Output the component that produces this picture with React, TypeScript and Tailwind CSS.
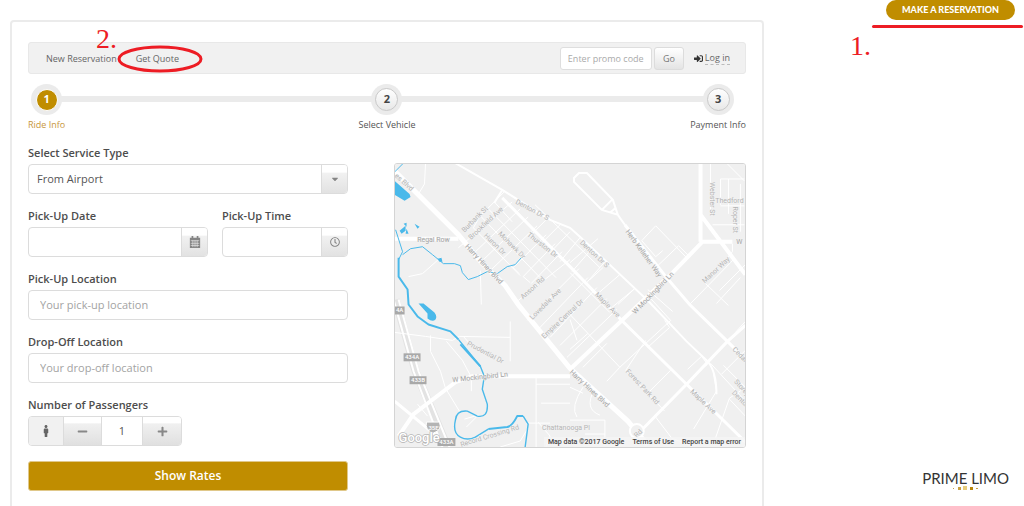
import { useState } from "react";
import {
  FaCaretDown,
  FaMale,
  FaMinus,
  FaPlus,
  FaRegClock,
  FaSignInAlt,
} from "react-icons/fa";

const steps = ["Ride Info", "Select Vehicle", "Payment Info"];

// [text, x, y, rotation]
const streetLabels: [string, number, number, number][] = [
  ["es Blvd", 402, 184, 42],
  ["Burbank St", 476, 221, -45],
  ["Brookfield Ave", 487, 225, -43],
  ["Denton Dr S", 531, 212, 28],
  ["Huron Dr", 493, 246, 45],
  ["Mohawk Dr", 510, 247, 45],
  ["Thurston Dr", 541, 247, 38],
  ["Anson Rd", 534, 290, -42],
  ["Lovedale Ave", 547, 306, -45],
  ["Empire Central Dr", 564, 321, -43],
  ["Denton Dr S", 593, 256, 43],
  ["Maple Ave", 606, 307, 45],
  ["Thedford", 730, 203, 0],
  ["Webster St", 710, 199, 90],
  ["Roper St", 734, 220, 90],
  ["Manor Way", 718, 272, -43],
  ["Prudential Dr", 484, 355, 28],
  ["Forest Park Rd", 641, 389, 47],
  ["Maple Ave", 702, 404, 43],
  ["Cedar", 739, 357, 45],
  ["Storey", 741, 390, 48],
  ["Denton", 740, 402, 45],
  ["Chattanooga Pl", 566, 431, 0],
  ["Record Crossing Rd", 490, 439, -17],
  ["Rd", 640, 436, -45],
];

const mainLabels: [string, number, number, number][] = [
  ["Regal Row", 433, 242, 0],
  ["Harry Hines Blvd", 482, 266, 47],
  ["Harry Hines Blvd", 588, 391, 43],
  ["Herb Kelleher Way", 642, 255, 54],
  ["W Mockingbird Ln", 655, 295, -46],
  ["W Mockingbird Ln", 480, 380, -6],
  ["W", 740, 244, 0],
];

const exits: [string, number, number, number][] = [
  ["4A", 394, 307, 10],
  ["434A", 403, 354, 17],
  ["433B", 409, 377, 17],
  ["433A", 437, 439, 18],
];

function CalendarIcon() {
  return (
    <svg viewBox="0 0 14 14" className="size-3" aria-hidden="true">
      <path fill="currentColor" d="M3 0h2v2h4V0h2v2h2v12H1V2h2z" />
      <path
        stroke="#f3f3f3"
        strokeWidth="0.7"
        d="M2 5.5h10M2 8.5h10M2 11h10M4.5 5v8M7 5v8M9.5 5v8"
      />
    </svg>
  );
}

function RouteMap() {
  return (
    <svg
      viewBox="394 164 352 284"
      preserveAspectRatio="xMidYMid slice"
      className="block h-[283px] w-full"
      role="img"
      aria-label="Map"
    >
      <rect x="394" y="164" width="352" height="284" fill="#f0f0f0" />

      {/* interstate */}
      <g fill="none" stroke="#e3e3e3">
        <path strokeWidth="8" d="M395 300 415 372 447 448" />
        <path stroke="#fff" strokeWidth="2" d="M393 300 413 372 442 448M398 300 418 372 449 448" />
      </g>

      {/* side streets */}
      <g fill="none" stroke="#fff" strokeWidth="1">
        <path d="M425 164 424 184 418 194M440 258 422 274 408 277M394 333 425 337 452 341 459 337 510 338M446 342 462 361 471 378 471 392M430 336 430 352 440 372M440 372 445 389 459 412M463 337 470 345M510 322V362M536 378V448M536 385H570M541 404H570M417 405 427 417M480 271 481 305M464 420 478 416 466 428" />
        <path d="M494 202 480 216 540 278M480 216 473 228 520 276M488 209 556 278M512 202 458 248M520 209 472 255M528 217 480 263M537 226 489 272M546 235 513 268 519 274M555 244 523 277 530 283M562 252 531 284M570 260 518 301M579 269 527 321M588 278 538 330M597 288 550 338M607 299 560 346M617 310 567 358M535 205 559 228 600 268M504 192 494 202 512 222M546 220 529 237M560 225 539 246M570 232 549 254M580 238 560 262M592 249 572 272M606 261 586 284M620 275 598 294M635 289 612 308" />
        <path d="M642 241 656 226 688 259 676 270M642 241 656 257 663 251M656 268 679 246 690 257M603 268 590 280M598 239 570 263M570 273 610 313M570 320 577 341M570 350 588 334 620 368 607 382M588 334 570 315M607 344 583 368M620 368 671 321 651 299M646 341 626 371M665 321 670 328 648 348M688 370 702 357 708 365 694 376M671 371 650 392M626 371 665 412M656 418 672 439 694 448M694 430 717 392M717 392 714 375M716 439 730 399 745 389M711 364 746 402M722 375 746 351M730 400 746 417M724 366 746 388M736 333 746 322M728 164 745 181M711 164V215M721 179H745M721 179V205M729 179V214M741 184V232M713 225H745M721 206H745M733 244V252L728 258M717 304 741 278M690 305 734 260M706 284 729 306M720 291 746 265M648 290 673 312M618 305 635 289M570 421H605V447M605 435H585M570 388 583 394M583 388Q570 408 577 418M594 391Q584 410 600 416M526 424H550M528 429 520 442 500 448M538 423 550 437 546 448" />
      </g>

      {/* secondary roads */}
      <g fill="none" stroke="#fff" strokeWidth="2">
        <path d="M453 162 502 190 550 220 570 228 580 237 613 268 650 303 687 342 708 362Q717 372 717 395" />
        <path d="M502 190 494 203M574 182 574 178 579 173 587 173 613 200 618 215 602 210ZM602 210 613 199M618 215 625 225M610 213 616 208" />
      </g>
      <g fill="none" stroke="#fff" strokeWidth="3">
        <path d="M502 198 570 267 623 322 687 385 746 443M625 225 667 278 690 305 728 342 746 360" />
        <path d="M394 402 440 440M746 326 728 342 687 385 640 433" />
      </g>
      <g fill="none" stroke="#fff" strokeWidth="4">
        <path d="M394 239H458M733 242H703L673 273 570 370M570 377H472L455 383 413 415 398 437M701 164V242M701 215 746 275" />
      </g>
      <path
        fill="none"
        stroke="#fff"
        strokeWidth="5"
        d="M394 171 458 235 482 264 505 286 518 305 570 369 628 422 648 446"
      />
      <circle cx="637" cy="432" r="7" fill="#f0f0f0" stroke="#fff" strokeWidth="2" />

      {/* water */}
      <g fill="none" stroke="#4ab9ea" strokeLinejoin="round">
        <path strokeWidth="1" d="M395 230 402 252 398 260M402 255 410 249 422 247 432 255 443 264 454 264 460 266 462 273 468 280 477 277 487 272 497 274 507 267 515 265 522 257M394 172 402 164" />
        <path strokeWidth="2" d="M398 258V277L407 290 408 305 417 317 428 325 450 332 458 340" />
        <path strokeWidth="1.4" d="M458 340 480 367 484 377 482 390 487 405Q488 419 477 417L467 412Q456 411 455 421 452 434 460 438 467 442 475 438L488 430M523 417 528 425 525 448" />
        <path strokeWidth="2" d="M460 345 480 367M488 430 507 428Q512 427 517 417L523 417" />
      </g>
      <g fill="#4ab9ea">
        <path d="M394 181 409 194 410 197 404 201 394 195ZM418 304H423L434 313Q437 317 435 320 432 323 427 319L427 314ZM399 231 405 226 405 231 401 234ZM403 224 406 223 406 227ZM406 229 408 234 405 234ZM414 224 419 227 417 229ZM437 259 441 258 442 262 439 262Z" />
      </g>

      {/* text */}
      <g
        fontFamily="Roboto, sans-serif"
        fill="#b4b4b4"
        stroke="#f3f3f3"
        strokeWidth="1"
        paintOrder="stroke"
        textAnchor="middle"
      >
        <g fontSize="7">
          {streetLabels.map(([text, x, y, r], i) => (
            <text key={i} transform={`translate(${x} ${y}) rotate(${r})`}>
              {text}
            </text>
          ))}
        </g>
        <g fontSize="7" fill="#a4a4a4">
          {mainLabels.map(([text, x, y, r], i) => (
            <text key={i} transform={`translate(${x} ${y}) rotate(${r})`}>
              {text}
            </text>
          ))}
        </g>
      </g>
      <g fontFamily="Roboto, sans-serif" fontSize="6" fontWeight="500" textAnchor="middle">
        {exits.map(([text, x, y, w]) => (
          <g key={text}>
            <rect x={x} y={y} width={w} height="8" fill="#a9a9a9" />
            <text x={x + w / 2} y={y + 6} fill="#fff">
              {text}
            </text>
          </g>
        ))}
        <path fill="#b4b4b4" stroke="#fff" d="M426 423H439Q442 431 433 434 424 431 426 423Z" />
        <text x="433" y="431" fill="#fff">
          35E
        </text>
      </g>
      <text
        x="398"
        y="443"
        fontFamily="Roboto, sans-serif"
        fontSize="13"
        fontWeight="500"
        fill="#fff"
        stroke="#b5b5b5"
        strokeWidth="1.5"
        paintOrder="stroke"
      >
        Google
      </text>
    </svg>
  );
}

const labelClass = "block h-[21px] text-[11px] leading-[19px] font-semibold text-[#4d4d4d]";
const boxClass = "flex h-[30px] overflow-hidden rounded border border-[#dcdcdc] bg-white";
const addonClass =
  "flex w-[26px] shrink-0 items-center justify-center border-l border-[#dcdcdc] bg-linear-to-b from-white from-25% via-[#f1f1f1] via-30% to-[#e2e2e2] text-[#858585]";
const stepButtonClass =
  "flex w-[38px] items-center justify-center bg-linear-to-b from-white from-20% via-[#f0f0f0] via-25% to-[#e0e0e0] text-[#888]";

export default function App() {
  const [service, setService] = useState("From Airport");
  const [passengers, setPassengers] = useState(1);

  return (
    <div className="flex h-screen overflow-hidden bg-white pl-[10px] font-['Open_Sans',sans-serif] text-[#555]">
      <main className="min-w-0 flex-1 pt-5">
        <div className="min-h-full rounded border-2 border-[#ebebeb] px-4 pt-5 pb-8">
          <nav className="relative flex h-8 items-center rounded-[3px] border border-[#e8e8e8] bg-[#f1f1f1] pt-px pr-[15px] pl-[17px] text-[9px] text-[#666]">
            <a href="#reservation">New Reservation</a>
            <a href="#quote" className="ml-[19px]">
              Get Quote
            </a>
            <form className="ml-auto flex items-center gap-[2px]" onSubmit={(e) => e.preventDefault()}>
              <input
                aria-label="Promo code"
                placeholder="Enter promo code"
                className="h-[23px] w-[92px] rounded-[3px] border border-[#dedede] bg-white px-[7px] placeholder:text-[#aaa]"
              />
              <button className="h-[23px] w-[30px] rounded-[3px] border border-[#dcdcdc] bg-linear-to-b from-white to-[#e4e4e4] text-[#777]">
                Go
              </button>
            </form>
            <a href="#login" className="ml-[10px] flex items-center gap-[2px]">
              <FaSignInAlt className="size-[9px] text-[#333]" />
              <span className="border-b border-dashed border-[#bbb] leading-3">Log in</span>
            </a>

            {/* marker 2 */}
            <span className="absolute -top-5 left-[67px] font-['Liberation_Serif',serif] text-[28px] leading-8 text-[#ed1c24]">
              2.
            </span>
            <svg viewBox="0 0 88 30" className="absolute top-[1px] left-[87px] h-[30px] w-[88px]" aria-hidden="true">
              <ellipse cx="44" cy="15" rx="41" ry="12" fill="none" stroke="#ed1c24" strokeWidth="3" />
            </svg>
          </nav>

          <ol className="mt-[10px] grid grid-cols-3 text-[9px]">
            <li
              aria-hidden="true"
              className="col-span-3 col-start-1 row-start-1 mx-5 mt-[12px] h-[6px] bg-[#ebebeb]"
            />
            <li className="col-start-1 row-start-1 flex flex-col items-center justify-self-start text-[#c8963a]">
              <span className="flex size-[31px] items-center justify-center rounded-full bg-[#ebebeb]">
                <span className="flex size-[22px] items-center justify-center rounded-full border border-white bg-[#c08d00] text-[11px] font-bold text-white">
                  1
                </span>
              </span>
              <span className="leading-5">{steps[0]}</span>
            </li>
            <li className="col-start-2 row-start-1 flex flex-col items-center justify-self-center">
              <span className="flex size-[31px] items-center justify-center rounded-full bg-[#ebebeb]">
                <span className="flex size-[23px] items-center justify-center rounded-full border border-[#c9c9c9] bg-linear-to-b from-white to-[#e8e8e8] text-[11px] font-bold text-[#444]">
                  2
                </span>
              </span>
              <span className="leading-5">{steps[1]}</span>
            </li>
            <li className="col-start-3 row-start-1 flex flex-col items-center justify-self-end">
              <span className="flex size-[31px] items-center justify-center rounded-full bg-[#ebebeb]">
                <span className="flex size-[23px] items-center justify-center rounded-full border border-[#c9c9c9] bg-linear-to-b from-white to-[#e8e8e8] text-[11px] font-bold text-[#444]">
                  3
                </span>
              </span>
              <span className="leading-5">{steps[2]}</span>
            </li>
          </ol>

          <div className="mt-2 grid grid-cols-[minmax(0,10fr)_minmax(0,11fr)] items-start gap-x-[46px]">
            <form className="flex flex-col gap-3 text-[11px]" onSubmit={(e) => e.preventDefault()}>
              <div>
                <label htmlFor="service" className={labelClass}>
                  Select Service Type
                </label>
                <div className={boxClass}>
                  <select
                    id="service"
                    value={service}
                    onChange={(e) => setService(e.target.value)}
                    className="min-w-0 flex-1 appearance-none bg-transparent pl-2"
                  >
                    <option>From Airport</option>
                    <option>To Airport</option>
                  </select>
                  <span className={addonClass}>
                    <FaCaretDown className="size-[10px]" />
                  </span>
                </div>
              </div>

              <div className="grid grid-cols-[minmax(0,10fr)_minmax(0,7fr)] gap-[14px]">
                <div>
                  <label htmlFor="date" className={labelClass}>
                    Pick-Up Date
                  </label>
                  <div className={boxClass}>
                    <input id="date" className="min-w-0 flex-1 px-2" />
                    <span className={addonClass}>
                      <CalendarIcon />
                    </span>
                  </div>
                </div>
                <div>
                  <label htmlFor="time" className={labelClass}>
                    Pick-Up Time
                  </label>
                  <div className={boxClass}>
                    <input id="time" className="min-w-0 flex-1 px-2" />
                    <span className={addonClass}>
                      <FaRegClock className="size-[10px]" />
                    </span>
                  </div>
                </div>
              </div>

              <div>
                <label htmlFor="pickup" className={labelClass}>
                  Pick-Up Location
                </label>
                <div className={boxClass}>
                  <input
                    id="pickup"
                    placeholder="Your pick-up location"
                    className="min-w-0 flex-1 px-[11px] placeholder:text-[#a3a3a3]"
                  />
                </div>
              </div>

              <div>
                <label htmlFor="dropoff" className={labelClass}>
                  Drop-Off Location
                </label>
                <div className={boxClass}>
                  <input
                    id="dropoff"
                    placeholder="Your drop-off location"
                    className="min-w-0 flex-1 px-[11px] placeholder:text-[#a3a3a3]"
                  />
                </div>
              </div>

              <div>
                <label htmlFor="passengers" className={labelClass}>
                  Number of Passengers
                </label>
                <div className="inline-flex h-[30px] overflow-hidden rounded border border-[#dcdcdc] align-top">
                  <span className="flex w-[34px] items-center justify-center bg-[#f1f1f1] text-[#666]">
                    <FaMale className="size-3" />
                  </span>
                  <button
                    type="button"
                    aria-label="Fewer passengers"
                    onClick={() => setPassengers(Math.max(1, passengers - 1))}
                    className={`${stepButtonClass} border-l border-[#dcdcdc]`}
                  >
                    <FaMinus className="size-[11px]" />
                  </button>
                  <input
                    id="passengers"
                    inputMode="numeric"
                    value={passengers}
                    onChange={(e) => setPassengers(Number(e.target.value) || 1)}
                    className="w-[42px] border-x border-[#dcdcdc] bg-white text-center"
                  />
                  <button
                    type="button"
                    aria-label="More passengers"
                    onClick={() => setPassengers(passengers + 1)}
                    className={stepButtonClass}
                  >
                    <FaPlus className="size-[11px]" />
                  </button>
                </div>
              </div>

              <button className="mt-[3px] h-[30px] rounded-[3px] border border-[#e0c88a] bg-[#c08d00] text-[12px] font-semibold text-white">
                Show Rates
              </button>
            </form>

            <div className="relative mt-5 overflow-hidden rounded-[3px] border border-[#d4d4d4]">
              <RouteMap />
              <div className="absolute right-0 bottom-0 flex gap-2 bg-[#f5f5f5]/80 px-1 font-['Roboto',sans-serif] text-[7px] leading-[10px] font-medium text-[#444]">
                <span>Map data ©2017 Google</span>
                <a href="#terms">Terms of Use</a>
                <a href="#report">Report a map error</a>
              </div>
            </div>
          </div>
        </div>
      </main>

      <aside className="flex w-[260px] shrink-0 flex-col items-end">
        <button className="mr-[9px] h-5 w-[129px] rounded-full bg-[#c08d00] font-['Lato',sans-serif] text-[9px] font-black text-white">
          MAKE A RESERVATION
        </button>
        <div className="mt-[5px] mr-[1px] h-[3px] w-[151px] rounded-full bg-[#ed1c24]" />
        <span className="mt-[2px] mr-[153px] font-['Liberation_Serif',serif] text-[28px] leading-8 text-[#ed1c24]">
          1.
        </span>
        <div className="mt-auto mr-[15px] mb-[15px] flex flex-col items-center">
          <span className="font-['Lato',sans-serif] text-[15px] leading-4 text-[#333]">
            PRIME LIMO
          </span>
          <svg viewBox="0 0 25 5" className="h-[5px] w-[25px]" aria-hidden="true">
            <path fill="#c9a040" d="M0 2h1v1H0zM5 1h3v3H5zM23 2h2v1h-2z" />
            <path fill="#e8cd7c" d="M10 0h4v4h-4z" />
            <path fill="#b8860b" d="M17 1h3v3h-3z" />
          </svg>
        </div>
      </aside>
    </div>
  );
}
